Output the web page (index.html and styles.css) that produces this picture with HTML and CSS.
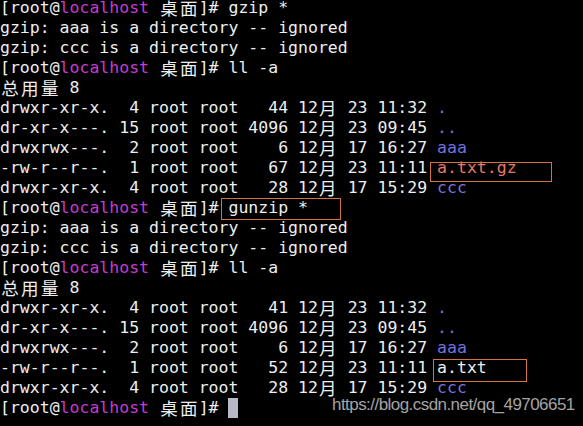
FILE: index.html
```html
<!DOCTYPE html>
<html lang="zh">
<head>
<meta charset="utf-8">
<title>terminal</title>
<link rel="stylesheet" href="styles.css">
</head>
<body>
<div class="term">
<pre class="screen">[root@<span class="host">localhost</span> <span class="cj">桌</span><span class="cj">面</span>]# gzip *
gzip: aaa is a directory -- ignored
gzip: ccc is a directory -- ignored
[root@<span class="host">localhost</span> <span class="cj">桌</span><span class="cj">面</span>]# ll -a
<span class="cj">总</span><span class="cj">用</span><span class="cj">量</span> 8
drwxr-xr-x.  4 root root   44 12<span class="cj">月</span> 23 11:32 <span class="dir">.</span>
dr-xr-x---. 15 root root 4096 12<span class="cj">月</span> 23 09:45 <span class="dir">..</span>
drwxrwx---.  2 root root    6 12<span class="cj">月</span> 17 16:27 <span class="dir">aaa</span>
-rw-r--r--.  1 root root   67 12<span class="cj">月</span> 23 11:11 <span class="arc">a.txt.gz</span>
drwxr-xr-x.  4 root root   28 12<span class="cj">月</span> 17 15:29 <span class="dir">ccc</span>
[root@<span class="host">localhost</span> <span class="cj">桌</span><span class="cj">面</span>]# gunzip *
gzip: aaa is a directory -- ignored
gzip: ccc is a directory -- ignored
[root@<span class="host">localhost</span> <span class="cj">桌</span><span class="cj">面</span>]# ll -a
<span class="cj">总</span><span class="cj">用</span><span class="cj">量</span> 8
drwxr-xr-x.  4 root root   41 12<span class="cj">月</span> 23 11:32 <span class="dir">.</span>
dr-xr-x---. 15 root root 4096 12<span class="cj">月</span> 23 09:45 <span class="dir">..</span>
drwxrwx---.  2 root root    6 12<span class="cj">月</span> 17 16:27 <span class="dir">aaa</span>
-rw-r--r--.  1 root root   52 12<span class="cj">月</span> 23 11:11 a.txt
drwxr-xr-x.  4 root root   28 12<span class="cj">月</span> 17 15:29 <span class="dir">ccc</span>
[root@<span class="host">localhost</span> <span class="cj">桌</span><span class="cj">面</span>]# <span class="cursor"></span></pre>
<div class="mark mark-gz"></div>
<div class="mark mark-cmd"></div>
<div class="mark mark-txt"></div>
<div class="watermark">https://blog.csdn.net/qq_49706651</div>
</div>
</body>
</html>
```
FILE: styles.css
```css
html, body {
  margin: 0;
  padding: 0;
  background: #000;
  overflow: hidden;
}
.term {
  position: relative;
  width: 583px;
  height: 426px;
  background: #000;
  overflow: hidden;
}
.screen {
  margin: -2px 0 0 0;
  padding: 0;
  font-family: "DejaVu Sans Mono", monospace;
  font-size: 16.5px;
  line-height: 20px;
  color: #eeeeee;
  white-space: pre;
}
.host { color: #c43cd0; }
.dir { color: #7272dc; }
.arc { color: #e8786a; }
.cj {
  display: inline-block;
  width: 19.86px;
  height: 20px;
  line-height: 20px;
  vertical-align: top;
  text-align: center;
  font-family: "Noto Sans CJK SC", sans-serif;
  font-size: 17.5px;
}
.cursor {
  display: inline-block;
  width: 10px;
  height: 20px;
  vertical-align: top;
  background: #b8b8c6;
}
.mark {
  position: absolute;
  border: 1.5px solid #d3733f;
  box-sizing: border-box;
}
.mark-gz { left: 430px; top: 162px; width: 122px; height: 20px; }
.mark-cmd { left: 221px; top: 198px; width: 120px; height: 22px; }
.mark-txt { left: 433px; top: 359px; width: 94px; height: 23px; }
.watermark {
  position: absolute;
  left: 332px;
  top: 395px;
  font-family: "Liberation Sans", Arial, sans-serif;
  font-size: 17px;
  letter-spacing: -0.55px;
  color: #a4a4a4;
  white-space: nowrap;
}
```
